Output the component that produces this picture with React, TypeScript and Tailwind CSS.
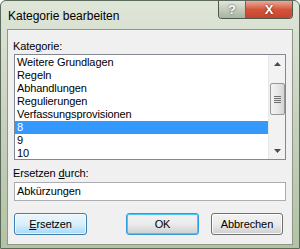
import React from "react";

const items = [
  "Weitere Grundlagen",
  "Regeln",
  "Abhandlungen",
  "Regulierungen",
  "Verfassungsprovisionen",
  "8",
  "9",
  "10",
];

function Arrow({ up }: { up?: boolean }) {
  return (
    <svg width="7" height="4" viewBox="0 0 7 4">
      {up ? (
        <path d="M0 4 L3.5 0 L7 4 Z" fill="#4a4a4a" />
      ) : (
        <path d="M0 0 L3.5 4 L7 0 Z" fill="#4a4a4a" />
      )}
    </svg>
  );
}

export default function App() {
  const selected = 5;
  return (
    <div
      className="w-[300px] h-[249px] overflow-hidden flex flex-col rounded-t-[6px] border border-[#5b6a5a] bg-gradient-to-b from-[#dfe6d8] via-[#c6d1bd] to-[#b3c2a3] text-[11px] tracking-[-0.1px] text-black"
      style={{ fontFamily: '"Liberation Sans", Arial, sans-serif' }}
    >
      {/* title bar */}
      <div className="h-[28px] flex items-start shrink-0">
        <div className="pl-[7px] pt-[8px] text-[12px] leading-[14px] tracking-normal text-black">
          Kategorie bearbeiten
        </div>
        <div className="ml-auto mr-[6px] flex h-[18px] rounded-b-[4px] border border-t-0 border-[#4d5a4d] overflow-hidden">
          <div className="w-[27px] flex items-center justify-center bg-gradient-to-b from-[#e2e6dc] via-[#c3cbbb] to-[#a9b3a0] border-r border-[#5f6b5d] text-white font-bold text-[13px] [text-shadow:0_0_2px_#333]">
            ?
          </div>
          <div className="w-[46px] flex items-center justify-center bg-gradient-to-b from-[#eba898] via-[#d3553b] to-[#c7442c] text-white font-bold text-[13px] [text-shadow:0_0_2px_#4a1a10]">
            X
          </div>
        </div>
      </div>

      {/* client area */}
      <div className="mx-[6px] mb-[3px] flex-1 border border-[#8d9889] bg-[#f0f0f0] flex flex-col px-[6px] pt-[10px]">
        <div className="text-[11px] leading-[13px] ml-[-1px]">
          Kate<span className="underline">g</span>orie:
        </div>
        <div className="mt-[1px] h-[106px] border border-[#828790] bg-white flex">
          <div className="flex-1 pt-[1px] flex flex-col">
            {items.map((it, i) => (
              <div
                key={it}
                className={
                  "h-[13px] text-[11px] leading-[13px] pl-[2px] " +
                  (i === selected ? "bg-[#3399ff] text-white" : "")
                }
              >
                {it}
              </div>
            ))}
          </div>
          <div className="w-[17px] bg-[#f2f2f2] border-l border-[#e6e6e6] flex flex-col items-center">
            <div className="h-[17px] flex items-center justify-center">
              <Arrow up />
            </div>
            <div className="mt-[11px] w-[15px] h-[32px] rounded-[2px] border border-[#979797] bg-gradient-to-r from-[#f3f3f3] via-[#e8e8e8] to-[#d4d4d4] flex flex-col items-center justify-center gap-[1px]">
              <div className="w-[7px] h-[1px] bg-[#6e6e6e]" />
              <div className="w-[7px] h-[1px] bg-[#6e6e6e]" />
              <div className="w-[7px] h-[1px] bg-[#6e6e6e]" />
              <div className="w-[7px] h-[1px] bg-[#6e6e6e]" />
            </div>
            <div className="mt-auto h-[17px] flex items-center justify-center">
              <Arrow />
            </div>
          </div>
        </div>

        <div className="mt-[7px] text-[11px] leading-[13px] ml-[-1px]">
          Ersetzen <span className="underline">d</span>urch:
        </div>
        <div className="mt-[2px] h-[19px] border border-[#abadb3] bg-white pl-[2px] text-[11px] leading-[17px]">
          Abkürzungen
        </div>

        <div className="mt-[12px] flex items-center text-[11px]">
          <button className="w-[73px] h-[22px] rounded-[3px] border border-[#3c7fb1] bg-gradient-to-b from-[#eaf6fd] via-[#d9f0fc] to-[#a7d9f5] shadow-[inset_0_0_0_1px_#ffffffaa]">
            <span className="underline">E</span>rsetzen
          </button>
          <button className="ml-[39px] w-[73px] h-[22px] rounded-[3px] border border-[#3399dd] bg-gradient-to-b from-[#f2f2f2] via-[#ebebeb] to-[#cfcfcf] shadow-[inset_0_0_0_1px_#48c8f8]">
            OK
          </button>
          <button className="ml-[12px] w-[72px] h-[22px] rounded-[3px] border border-[#707070] bg-gradient-to-b from-[#f2f2f2] via-[#ebebeb] to-[#cfcfcf] shadow-[inset_0_0_0_1px_#ffffffcc]">
            Abbrechen
          </button>
        </div>
      </div>
    </div>
  );
}
